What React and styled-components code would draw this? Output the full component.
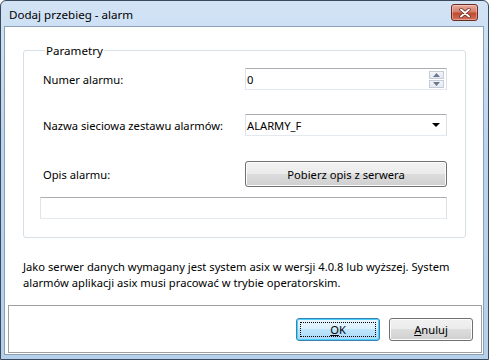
import React from "react";
import styled, { createGlobalStyle } from "styled-components";

const Global = createGlobalStyle`
  html, body { margin: 0; padding: 0; background: #fff; }
  body { font-family: "Noto Sans", "DejaVu Sans", sans-serif; font-size: 11.2px; color: #000; }
  * { box-sizing: border-box; }
`;

const Window = styled.div`
  width: 489px;
  height: 360px;
  border: 1px solid #3a4a5c;
  border-radius: 6px 6px 0 0;
  background: linear-gradient(180deg, #d2e3f5 0%, #bcd4ee 40%, #b6cfea 100%);
  display: flex;
  flex-direction: column;
  padding: 0 4px 4px 3px;
`;

const TitleBar = styled.div`
  height: 25px;
  display: flex;
  align-items: center;
  justify-content: space-between;
  padding: 0 6px 0 5px;
`;

const Title = styled.span`
  font-size: 11.6px;
  color: #000;
  position: relative;
  top: 1px;
`;

const CloseBtn = styled.div`
  width: 27px;
  height: 17px;
  margin-top: -2px;
  border: 1px solid #6d2a1f;
  border-radius: 3px;
  background: linear-gradient(180deg, #e9a99b 0%, #d5806e 45%, #c24a32 55%, #d0705a 100%);
  display: flex;
  align-items: center;
  justify-content: center;
  box-shadow: inset 0 0 0 1px rgba(255,255,255,0.35);
`;

const Client = styled.div`
  flex: 1;
  background: #fff;
  border: 1px solid #8aa0b8;
  display: flex;
  flex-direction: column;
`;

const Body = styled.div`
  padding: 16px 18px 0 18px;
  flex: 1;
  display: flex;
  flex-direction: column;
`;

const Group = styled.fieldset`
  margin: 0;
  border: 1px solid #d5dfe5;
  border-radius: 3px;
  padding: 10px 18px 13px 16px;
  height: 195px;
  display: flex;
  flex-direction: column;
`;

const Legend = styled.legend`
  padding: 0 1px;
  margin-left: 5px;
  font-size: 11.6px;
`;

const Row = styled.div`
  display: grid;
  grid-template-columns: 205px 202px;
  align-items: center;
  height: ${p => p.$h || 22}px;
  margin-bottom: ${p => p.$mb || 0}px;
`;

const Label = styled.span`
  padding-left: 3px;
`;

const InputBox = styled.div`
  height: 22px;
  border: 1px solid #abadb3;
  border-left-color: #e2e3ea;
  border-right-color: #dbdfe6;
  border-bottom-color: #e3e9ef;
  background: #fff;
  display: flex;
  align-items: center;
  padding-left: 1px;
  width: ${p => p.$w || 202}px;
`;

const InputText = styled.span`
  flex: 1;
`;

const Spin = styled.div`
  display: flex;
  flex-direction: column;
  gap: 1px;
  margin-right: 2px;
`;

const SpinBtn = styled.div`
  width: 15px;
  height: 8px;
  border: 1px solid #c6cbd7;
  background: linear-gradient(180deg, #f3f5fa, #e3e8f2);
  display: flex;
  align-items: center;
  justify-content: center;
`;

const ComboArrow = styled.div`
  width: 0;
  height: 0;
  border-left: 4px solid transparent;
  border-right: 4px solid transparent;
  border-top: 4px solid #000;
  margin-right: 6px;
`;

const Button = styled.div`
  width: ${p => p.$w}px;
  height: ${p => p.$h || 23}px;
  border: 1px solid ${p => (p.$default ? "#3c7fb1" : "#707070")};
  border-radius: 3px;
  background: ${p =>
    p.$default
      ? "linear-gradient(180deg, #eaf6fd 0%, #d9f0fc 49%, #bee6fd 50%, #a7d9f5 100%)"
      : "linear-gradient(180deg, #f2f2f2 0%, #ebebeb 49%, #dddddd 50%, #cfcfcf 100%)"};
  box-shadow: inset 0 0 0 1px ${p => (p.$default ? "#48d2fe" : "#fcfcfc")};
  display: flex;
  align-items: center;
  justify-content: center;
  position: relative;
`;

const Focus = styled.span`
  position: absolute;
  inset: 3px;
  border: 1px dotted #000;
`;

const Para = styled.p`
  margin: 21px 0 0 0;
  line-height: 16px;
  padding-left: 0;
`;

const Footer = styled.div`
  margin: 0 1px 1px 3px;
  height: 48px;
  border: 1px solid #a0a0a0;
  display: flex;
  justify-content: flex-end;
  align-items: center;
  gap: 9px;
  padding: 0 8px 0 0;
`;

const U = styled.span`
  text-decoration: underline;
`;

export default function App() {
  return (
    <>
      <Global />
      <Window>
        <TitleBar>
          <Title>Dodaj przebieg - alarm</Title>
          <CloseBtn>
            <svg width="12" height="10" viewBox="0 0 12 10">
              <path d="M2 1.5 L10 8.5 M10 1.5 L2 8.5" stroke="#5a1a10" strokeWidth="3.2" strokeLinecap="round" />
              <path d="M2 1.5 L10 8.5 M10 1.5 L2 8.5" stroke="#fff" strokeWidth="2" strokeLinecap="round" />
            </svg>
          </CloseBtn>
        </TitleBar>
        <Client>
          <Body>
            <Group>
              <Legend>Parametry</Legend>
              <Row $mb={24}>
                <Label>Numer alarmu:</Label>
                <InputBox>
                  <InputText>0</InputText>
                  <Spin>
                    <SpinBtn>
                      <svg width="7" height="4" viewBox="0 0 7 4"><path d="M0 4 L3.5 0 L7 4 Z" fill="#6b7890" /></svg>
                    </SpinBtn>
                    <SpinBtn>
                      <svg width="7" height="4" viewBox="0 0 7 4"><path d="M0 0 L3.5 4 L7 0 Z" fill="#6b7890" /></svg>
                    </SpinBtn>
                  </Spin>
                </InputBox>
              </Row>
              <Row $mb={25}>
                <Label>Nazwa sieciowa zestawu alarmów:</Label>
                <InputBox>
                  <InputText>ALARMY_F</InputText>
                  <ComboArrow />
                </InputBox>
              </Row>
              <Row $h={26} $mb={10}>
                <Label>Opis alarmu:</Label>
                <Button $w={202} $h={26}>Pobierz opis z serwera</Button>
              </Row>
              <InputBox $w={407} />
            </Group>
            <Para>
              Jako serwer danych wymagany jest system asix w wersji 4.0.8 lub wyższej. System alarmów aplikacji asix musi pracować w trybie operatorskim.
            </Para>
          </Body>
          <Footer>
            <Button $w={84} $default>
              <Focus />
              <U>O</U>K
            </Button>
            <Button $w={84}>
              <U>A</U>nuluj
            </Button>
          </Footer>
        </Client>
      </Window>
    </>
  );
}
